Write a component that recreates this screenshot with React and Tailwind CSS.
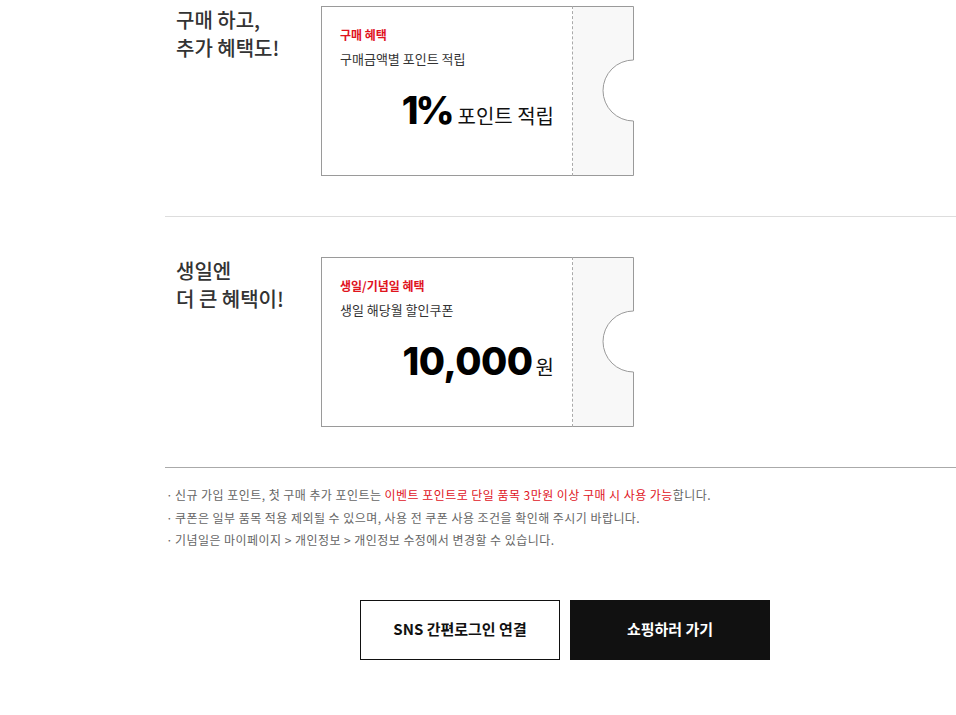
import React from "react";

const KR = { fontFamily: '"Noto Sans CJK KR", "Noto Sans", sans-serif' };

function Stub() {
  return (
    <svg width="61" height="170" viewBox="0 0 61 170" className="block shrink-0">
      <path
        d="M0 0.5 H60.5 V54 A30.5 30.5 0 0 0 60.5 115 V169.5 H0 Z"
        fill="#f8f8f8"
        stroke="none"
      />
      <path
        d="M0 0.5 H60.5 V54 A30.5 30.5 0 0 0 60.5 115 V169.5 H0"
        fill="none"
        stroke="#9a9a9a"
        strokeWidth="1"
      />
    </svg>
  );
}

function Coupon({ label, desc, big, unit, narrow }) {
  return (
    <div className="flex h-[170px] w-[312px]">
      <div className="flex w-[251px] shrink-0 flex-col border-y border-l border-[#9a9a9a] pl-[18px] pr-[18px] pt-[19px]">
        <div className="text-[12px] font-bold leading-[18px] text-[#e0141e]">{label}</div>
        <div className="mt-[6px] text-[13px] leading-[18px] text-[#333]">{desc}</div>
        <div className="mt-[23px] flex items-baseline justify-end">
          <span
            className={
              narrow
                ? "text-[38px] font-extrabold leading-none tracking-[-3px] text-black"
                : "text-[38px] font-extrabold leading-none tracking-[-0.5px] text-black"
            }
            style={{ fontFamily: '"Inter", "Noto Sans", sans-serif' }}
          >
            {big}
          </span>
          <span
            className={
              narrow
                ? "ml-[6px] text-[20px] leading-none text-[#111]"
                : "ml-[3px] text-[20px] leading-none text-[#111]"
            }
          >
            {unit}
          </span>
        </div>
      </div>
      <div className="h-[170px] w-0 shrink-0 border-l border-dashed border-[#aaa]" />
      <Stub />
    </div>
  );
}

function Section({ title1, title2, coupon }) {
  return (
    <div className="flex">
      <div className="w-[156px] shrink-0 pl-[11px] text-[20px] font-medium leading-[28px] text-[#333]">
        <div>{title1}</div>
        <div>{title2}</div>
      </div>
      {coupon}
    </div>
  );
}

export default function App() {
  return (
    <div className="w-full overflow-hidden bg-white" style={KR}>
      <div className="ml-[165px] w-[800px] pb-[55px] pt-[6px]">
        <Section
          title1="구매 하고,"
          title2="추가 혜택도!"
          coupon={
            <Coupon
              label="구매 혜택"
              desc="구매금액별 포인트 적립"
              big="1%"
              unit="포인트 적립"
              narrow
            />
          }
        />
        <div className="mt-[40px] mb-[40px] h-px bg-[#dddddd]" />
        <Section
          title1="생일엔"
          title2="더 큰 혜택이!"
          coupon={
            <Coupon
              label="생일/기념일 혜택"
              desc="생일 해당월 할인쿠폰"
              big="10,000"
              unit="원"
            />
          }
        />
        <div className="mt-[40px] h-px bg-[#aaaaaa]" />
        <ul className="mt-[16px] text-[12px] leading-[22.5px] tracking-[0.45px] text-[#666]">
          <li className="flex">
            <span className="w-[10px] pl-[1px]">·</span>
            <span>
              신규 가입 포인트, 첫 구매 추가 포인트는{" "}
              <span className="text-[#e0141e]">이벤트 포인트로 단일 품목 3만원 이상 구매 시 사용 가능</span>합니다.
            </span>
          </li>
          <li className="flex">
            <span className="w-[10px] pl-[1px]">·</span>
            <span>쿠폰은 일부 품목 적용 제외될 수 있으며, 사용 전 쿠폰 사용 조건을 확인해 주시기 바랍니다.</span>
          </li>
          <li className="flex">
            <span className="w-[10px] pl-[1px]">·</span>
            <span>기념일은 마이페이지 &gt; 개인정보 &gt; 개인정보 수정에서 변경할 수 있습니다.</span>
          </li>
        </ul>
        <div className="mt-[48px] flex justify-center gap-[10px]">
          <button className="flex h-[60px] w-[200px] items-center justify-center border border-[#111] bg-white text-[15px] font-bold text-[#111]">
            SNS 간편로그인 연결
          </button>
          <button className="flex h-[60px] w-[200px] items-center justify-center bg-[#111] text-[15px] font-bold text-white">
            쇼핑하러 가기
          </button>
        </div>
      </div>
    </div>
  );
}
